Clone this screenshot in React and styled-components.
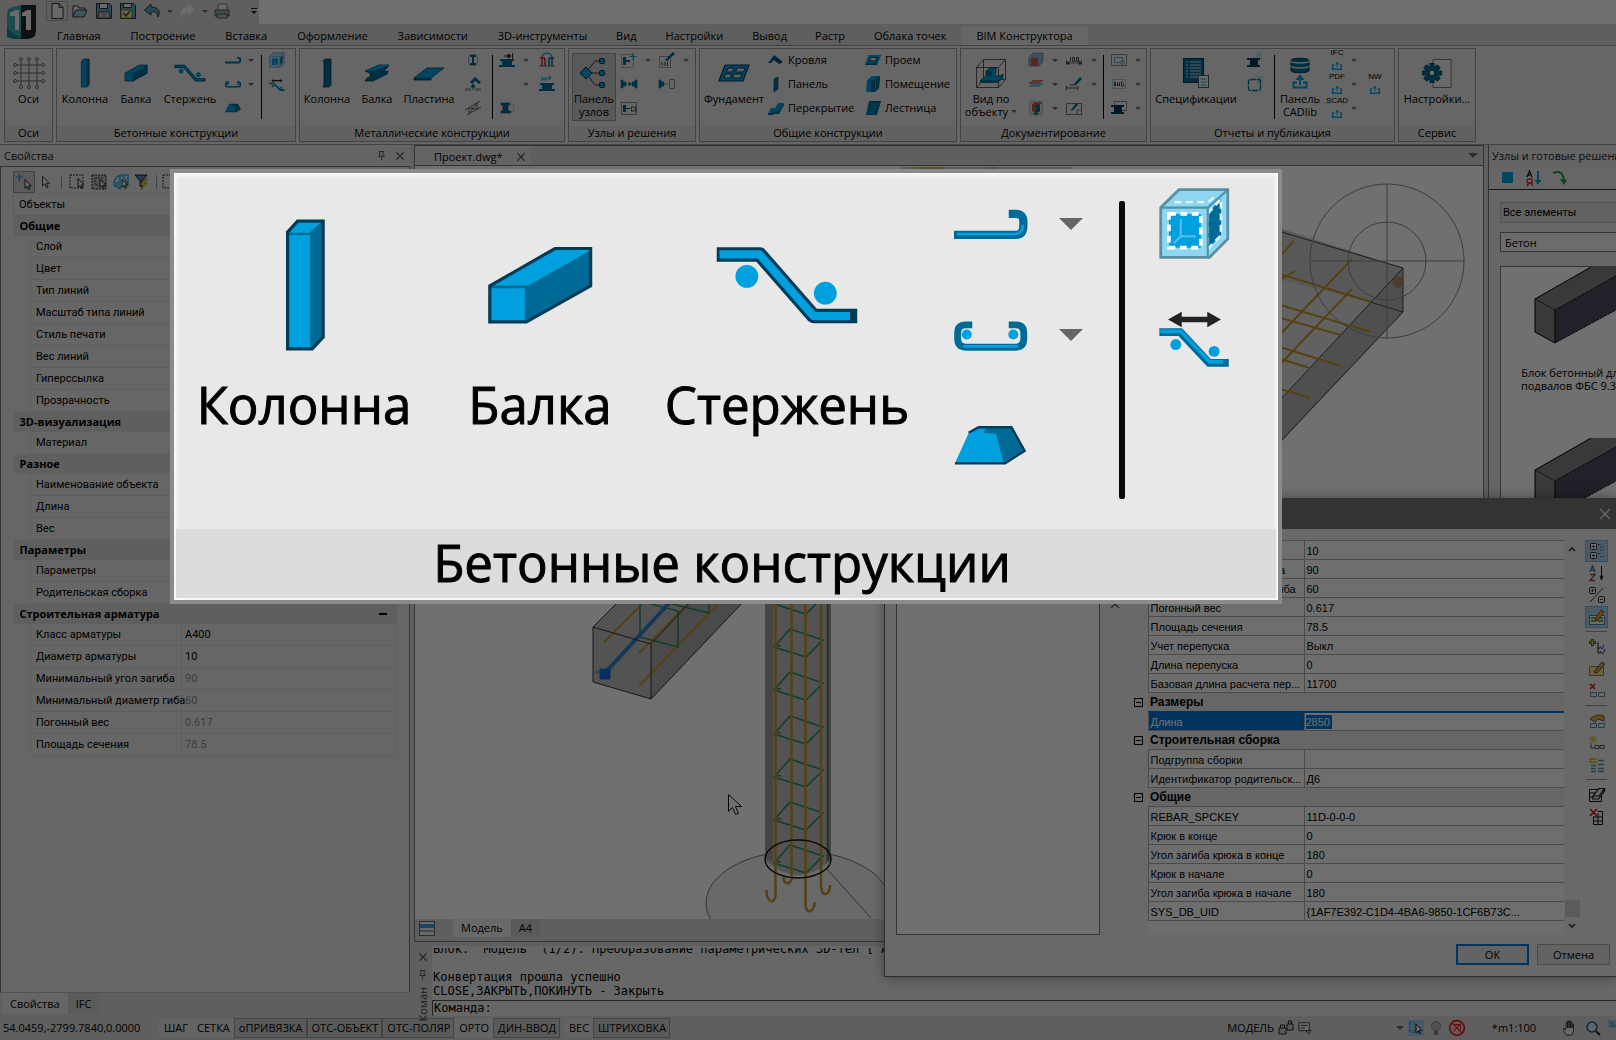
import React from 'react'
import styled, { createGlobalStyle } from 'styled-components'

const BLUE = '#00a0df';
const DARK = '#006a96';
const LINE = '#003c55';

const GlobalStyle = createGlobalStyle`
*{ box-sizing:border-box; }
html, body, #root{ height:100%; }
body{
    margin:0;
    overflow:hidden;
    background:#d8d8d8;
    color:#000;
    font-family:"Open Sans", sans-serif;
    font-size:11px;
    line-height:14px;
}
button, input, select{ font:inherit; color:inherit; }
button{ border:none; background:none; padding:0; }
a{ color:inherit; text-decoration:none; }
table{ border-collapse:collapse; }
`;

/* ---------- icons ---------- */

// 32 x 32 ribbon icons
const large = {
    axes: <g fill="none" stroke="#666"><path d="M8 4v24M16 4v24M24 4v24M4 8h24M4 16h24M4 24h24" /><g fill="#ececec"><circle cx="8" cy="2" r="1.5" /><circle cx="16" cy="2" r="1.5" /><circle cx="24" cy="2" r="1.5" /><circle cx="8" cy="30" r="1.5" /><circle cx="16" cy="30" r="1.5" /><circle cx="24" cy="30" r="1.5" /><circle cx="2" cy="8" r="1.5" /><circle cx="2" cy="16" r="1.5" /><circle cx="2" cy="24" r="1.5" /><circle cx="30" cy="8" r="1.5" /><circle cx="30" cy="16" r="1.5" /><circle cx="30" cy="24" r="1.5" /></g></g>,
    column: <><path d="M12.4 4.4 14.6 2h5.6v25.4l-2.4 2.6h-5.4z" fill={BLUE} /><path d="M17.4 4.4 20 2v25.4L17.6 30z" fill={DARK} /><path d="M12.4 4.8h5.2v25" fill="none" stroke={DARK} strokeWidth=".5" /><path d="M12.4 4.4 14.6 2h5.6v25.4l-2.4 2.6h-5.4z" fill="none" stroke={LINE} strokeWidth=".7" /></>,
    beam: <><path d="M5 16.2 19.3 8h7.8v8.2L13 24.1H5z" fill={BLUE} /><path d="M13 16.4 27.1 8.4v7.8L13 24.1z" fill={DARK} /><path d="M5 16.4h8v7.7" fill="none" stroke={DARK} strokeWidth=".6" /><path d="M5 16.2 19.3 8h7.8v8.2L13 24.1H5z" fill="none" stroke={LINE} strokeWidth=".7" /></>,
    rod: <><g fill="none" strokeLinejoin="round"><path d="M.6 9.3H10L21.8 22.8h9.6" stroke={LINE} strokeWidth="3.2" /><path d="M1.2 9.3H10L21.8 22.8h8" stroke={BLUE} strokeWidth="1.8" /></g><circle cx="7.2" cy="14.1" r="2.5" fill={BLUE} /><circle cx="24.4" cy="17.8" r="2.5" fill={BLUE} /></>,
    steelColumn: <path d="M12 4l2-2h6v26l-2 2h-6l1-2V5z" fill={DARK} stroke={LINE} strokeWidth=".8" />,
    steelBeam: <><path d="M4 14 18 8h10l-2 3-2 1v3l3-1-1 3-14 7H4l2-3 3-1v-4z" fill={DARK} stroke={LINE} strokeWidth=".8" /><path d="M4 14 18 8h10l-14 6z" fill={BLUE} /></>,
    plate: <><path d="M1 21 14 11h17L18 21v2H1z" fill={DARK} stroke={LINE} strokeWidth=".8" /><path d="M2 20.500 14 11.500h16L18 20.500z" fill={BLUE} /></>,
    nodes: <><path d="M8 16 17 4h8M8 16h17M8 16l9 12h8" fill="none" stroke="#333" /><path d="M2 16l6-6 6 6-6 6z" fill={BLUE} stroke={LINE} /><g fill={BLUE} stroke={LINE}><rect x="21.500" y="1.500" width="5" height="5" rx="1" /><rect x="21.500" y="13.500" width="5" height="5" rx="1" /><rect x="21.500" y="25.500" width="5" height="5" rx="1" /></g></>,
    foundation: <><path d="M7 8h24l-6 16H1z" fill={BLUE} stroke={LINE} strokeWidth="1.2" /><path d="M10 11h6l-1.500 4H8.500zM19 11h8l-1.500 4h-8zM7.500 17h6L12 21H6zM16 17h8l-1.500 4h-8z" fill="#d8d8d8" stroke={LINE} /></>,
    viewBox: <><path d="M1.500 10.500h22v20h-22zM1.500 10.500l7-8h22v20l-7 8M30 3l-6.500 7.500M8.500 2.500v20h22M8.500 22.500l-7 8" fill="none" stroke="#333" strokeWidth=".8" /><path d="M5 24l6-5v-5l4-3h6v5l-2 3h6l3-2v3l-6 4z" fill={BLUE} stroke={LINE} strokeWidth=".8" /><path d="M5 24h17l6-5v3l-6 4H5zM11 14h6v5h-6z" fill={DARK} /></>,
    spec: <><rect x="3.500" y="1.500" width="20" height="24" fill={DARK} stroke={LINE} /><path d="M6 5h2M6 8h2M6 11h2M6 14h2M6 17h2M6 20h2M10 5h11M10 8h11M10 11h11M10 14h11M10 17h11M10 20h9" stroke="#ddd" /><rect x="18.500" y="18.500" width="10" height="12" fill="#f2f2f2" stroke="#555" /><path d="M20.500 22h6M20.500 25h6M20.500 28h6" stroke={BLUE} /></>,
    cadlib: <><path d="M7 3.500c0-3 18-3 18 0v10c0 3-18 3-18 0z" fill={DARK} stroke={LINE} /><path d="M7 4c0 2.500 18 2.500 18 0M7 9c0 2.500 18 2.500 18 0" fill="none" stroke="#ddd" strokeWidth="1.500" /><path d="M16 28V21M13.500 22l2.500-3 2.500 3z" fill={BLUE} stroke={BLUE} strokeWidth="2" /><path d="M13 25.500H9.500v5h13v-5H19" fill="none" stroke={BLUE} strokeWidth="2" /></>,
    settings: <><path d="M12 2.500h18v28H12z" fill="#f2f2f2" stroke="#777" /><path d="M11 6v20M1 16h20M4 9l14 14M18 9 4 23" stroke={LINE} strokeWidth="5" /><path d="M11 6.500v19M1.500 16h19M4.400 9.400l13.200 13.200M17.600 9.400 4.400 22.600" stroke={DARK} strokeWidth="3.600" /><circle cx="11" cy="16" r="7" fill={DARK} /><circle cx="11" cy="16" r="3" fill="#f2f2f2" stroke={LINE} /></>,
};

// 16 x 16 icons
const small = {
    hook: <g fill="none"><path d="M0 10.500h13.500q1.700 0 1.700-2V7.500q0-1.600-1.700-1.600h-1.500" stroke={DARK} strokeWidth="1.800" /><path d="M.6 10.300h12.600q1.900 0 1.900-2" stroke={BLUE} strokeWidth=".6" /></g>,
    clamp: <><path d="M4 5.900H2.600Q.8 5.900.8 7.700v1.200q0 1.900 1.900 1.900h10.700q1.900 0 1.900-1.900V7.700q0-1.800-1.800-1.800h-1.500" fill="none" stroke={DARK} strokeWidth="1.500" /><path d="M2 10.600h12" stroke={BLUE} strokeWidth=".6" /><circle cx="2.800" cy="8" r="1.100" fill={BLUE} /><circle cx="13" cy="8" r="1.100" fill={BLUE} /></>,
    pit: <><path d="M.2 11.900 3.200 5.300 5.400 4h7.200l2.900 5.200-4.300 2.700z" fill={BLUE} /><path d="M9.200 5.400 6.400 5.200 7 4.300 12.600 4l2.900 5.200-4.600 2.700z" fill={DARK} /><path d="M3.200 5.200 5.400 4h7.200l2.900 5.200-4.300 2.700H.2" fill="none" stroke={LINE} strokeWidth=".5" /></>,
    cube: <><path d="M.6 4.500 4.600.6h10.700v10.800l-4 4H.6z" fill="#8fd6f1" stroke="#5b8fa3" strokeWidth=".6" /><path d="M2.400 5.900h7v7.400h-7z" fill={BLUE} stroke="#fff" strokeWidth=".8" strokeDasharray="1.500 1" /><path d="M10.900 5.800 13.800 2.600v8l-2.900 3z" fill={DARK} stroke="#dff4fb" strokeWidth=".6" strokeDasharray="1.500 1" /><path d="M.6 4.500h10.300v10.900M10.900 4.500 15.300.6" fill="none" stroke="#4a94b0" strokeWidth=".5" /><path d="M3.600 3.300h7.400l1.800-1.500" fill="none" stroke="#dff4fb" strokeWidth=".5" strokeDasharray="1.500 1" /><path d="M3.500 12.300 5 10.800h3.300M5 10.800V7" fill="none" stroke="#4fbdea" strokeWidth=".5" /></>,
    rodMove: <><path d="M2.200 4.700 5.200 3v1.100h5.600V3l3 1.700-3 1.700V5.300H5.200v1.100z" fill="#222" /><path d="M.3 7.500h4.600l6.300 6.700h4.300" fill="none" stroke={DARK} strokeWidth="1.700" /><path d="M.5 7.300H5l6.300 6.700h3" fill="none" stroke={BLUE} strokeWidth=".8" /><circle cx="3.900" cy="10.200" r="1.200" fill={BLUE} /><circle cx="12.300" cy="11.700" r="1.200" fill={BLUE} /></>,
    bolt: <><rect x="3.500" y="2.500" width="9" height="11" rx="3" fill="none" stroke="#999" /><path d="M5 3h6v2H9v6h2v2H5v-2h2V5H5z" fill={DARK} /></>,
    roofNode: <><path d="M5 6 10 1l6 5-2 2-4-3-3 3z" fill={DARK} /><path d="M8 14v-4M6 11l2-3 2 3z" stroke={DARK} fill={DARK} /><path d="M0 12h6v3H0zM10 12h6v3h-6z" fill="#aaa" /></>,
    truss: <path d="M0 10 15 1M2 15l14-8M4 8v6M12 3v6M4 14l8-11M4 8l8 1" fill="none" stroke="#666" />,
    plateArrow: <><path d="M1 7h14v2h-2v4h3v2H0v-2h3V9H1z" fill={DARK} /><path d="M5 4h6M9 2l3 2-3 2zM13.500 1v6" stroke="#222" fill="#222" /></>,
    ibeam: <><path d="M2 3h9v2H9v6h3v2H2v-2h2V5H2z" fill={DARK} stroke={LINE} strokeWidth=".6" /><path d="M10 4h5v3h-4M11 12h4V9" fill="none" stroke="#bbb" /></>,
    arch: <><path d="M3 6C3-.5 13-.5 13 6" fill="none" stroke={BLUE} strokeWidth="1.300" /><path d="M0 14h16" stroke="#666" /><path d="M1 6h5M3 6v8M6 6v8" stroke="#c22" strokeWidth="1.500" /><path d="M10 6h5M10 6v8M13 6v8" stroke={DARK} strokeWidth="1.500" /></>,
    mass: <><path d="M3 5V1l2 3 2-3v4M9 1h3L9 3h3" fill="none" stroke={BLUE} /><path d="M1 7h14v2h-2v4h3v2H0v-2h3V9H1z" fill={DARK} /></>,
    nodeAdd: <><rect x=".5" y="2.500" width="12" height="13" fill="none" stroke="#aaa" /><path d="M2 5h3v8H2zM5 8h4v2H5z" fill={DARK} /><path d="M12 1v7M8.500 4.500h7" stroke={BLUE} /></>,
    nodePair: <path d="M0 4h2v8H0zM2 6h3v4H2zM11 6h3v4h-3zM14 4h2v8h-2zM6 8h4M8 6l2 2-2 2z" fill={DARK} stroke={DARK} strokeWidth=".6" />,
    nodeFrame: <><rect x=".5" y="2.500" width="15" height="12" fill="none" stroke="#888" /><path d="M2 5h3v7H2zM5 8h4v1H5z" fill={DARK} /><rect x="10.500" y="7" width="4" height="4" fill="none" stroke="#555" /></>,
    nodeEdit: <><rect x=".5" y="4.500" width="11" height="11" fill="none" stroke="#999" /><path d="M3 10v4M6 10v4M8.500 10v4" stroke="#444" /><path d="M6 8 14 0l2 2-8 7z" fill={DARK} /></>,
    nodeCopy: <><path d="M0 4h2v8H0zM2 6h3v4H2zM6 8h3" fill={DARK} stroke={DARK} strokeWidth=".6" /><rect x="10.500" y="3.500" width="5" height="9" fill="none" stroke="#888" /></>,
    roof: <><path d="M0 11 6 3l9 7-4 2-5-4-3 3z" fill={DARK} /><path d="M6 3l9 7-4 2L5 7z" fill={LINE} opacity=".5" /></>,
    panel: <path d="M6 3 10 1v12l-4 3z" fill={DARK} stroke={LINE} strokeWidth=".6" />,
    slab: <><path d="M0 14l3-6h4l3-5h6l-5 10H6l-1 2H0z" fill={BLUE} /><path d="M0 13h5l1-2h5l5-8v2l-5 9H6l-1 1H0z" fill={DARK} /></>,
    opening: <><path d="M4 3h12l-4 10H0z" fill={DARK} /><path d="M4 3h12l-3.500 8H1z" fill={BLUE} /><path d="M6 5.500h6L10.500 9h-6z" fill="#e8e8e8" stroke={LINE} /></>,
    room: <><path d="M2 4 7 0h8l-1 12-4 4H1z" fill={BLUE} /><path d="M6 4h4v12H6zM11 3l4-3-1 12-3 3z" fill={DARK} /></>,
    stairs: <><path d="M4 1h12l-4 14H1z" fill={DARK} /><path d="M5 4h8M4 7h8M3.500 10h8M3 13h7" stroke={BLUE} strokeWidth="1.200" /></>,
    cutCube: <><path d="M1 5l4-4h10v9l-4 4H1z" fill="#7fb9cf" stroke="#777" strokeWidth=".6" /><path d="M3 6h7v8H3z" fill="#d9534f" /></>,
    cutPlane: <><path d="M5 4h11l-5 4H0z" fill="#d9736f" /><path d="M5 7h11l-5 4H0z" fill="#7fb9cf" /></>,
    cutBoth: <><rect x="2" y="2" width="12" height="12" fill="none" stroke="#999" /><path d="M4 4l4-2 4 2v7l-4 3-4-3z" fill="#c9534f" /><path d="M8 6l4-2v7l-4 3z" fill={DARK} /><path d="M8 16l-3-3h6zM11 1l3 3h-3z" fill="#2a8f4c" /></>,
    dim: <><path d="M0 11h16M.5 8v5M15.500 8v5M3 9.500 0 11l3 1.500zM13 9.500l3 1.500-3 1.500z" stroke="#444" fill="#444" strokeWidth=".7" /><path d="M4.500 5v4.500M6.500 5.500h2v4h-2zM10.500 5.500h2v4h-2z" fill="none" stroke="#444" /></>,
    dimEdit: <><path d="M0 12h12M.5 10v4M12 10v4M4 9h4" stroke="#444" fill="none" /><path d="M8 8 14 1l2 2-7 7z" fill={DARK} /></>,
    sheet: <><rect x=".5" y="3.500" width="15" height="11" fill="none" stroke="#777" /><path d="M11 14v-4h4" fill="none" stroke="#777" /><path d="M5 10 10 3l2 2-6 6z" fill={DARK} /></>,
    sheetView: <><rect x=".5" y="2.500" width="15" height="11" fill="none" stroke="#888" /><rect x="3.500" y="5.500" width="8" height="5" fill="none" stroke="#62b5d4" /><path d="M10 9h3v3h-3z" fill="#ececec" stroke="#888" /></>,
    dwg: <><rect x="1.500" y="3.500" width="13" height="9" fill="none" stroke="#8cc4da" /><path d="M3.500 6v4h1V6zM6.500 6v4l1-2 1 2V6M12.500 6h-2v4h2V8" fill="none" stroke="#333" strokeWidth=".8" /></>,
    beamDoc: <><rect x="3.500" y="1.500" width="12" height="9" fill="#f0f0f0" stroke="#888" /><path d="M0 5h13v2h-2v5h2v2H0v-2h3V7H0z" fill={LINE} /></>,
    beamPage: <><path d="M9 0h6v9H9z" fill="#b6dcea" /><path d="M0 6h13v2h-2v5h2v2H0v-2h3V8H0z" fill={LINE} /></>,
    nodePage: <><path d="M10 0h6v9h-6z" fill="#b6dcea" /><rect x="1.500" y="3.500" width="12" height="11" rx="2" fill="none" stroke={DARK} strokeWidth="1.300" strokeDasharray="6 1" /></>,
    share: <><path d="M8 12V7M6.500 8 8 6l1.500 2z" stroke={BLUE} fill={BLUE} /><path d="M5 9H3v5h10V9h-2" fill="none" stroke={BLUE} strokeWidth="1.500" /></>,
    newDoc: <path d="M3 .5h7l4 4v11H3zM10 .5v4h4" fill="#f0f0f0" stroke="#333" />,
    open: <><path d="M1 13V3h5l1 2h6v2" fill="#eee" stroke="#333" /><path d="M1 13 4 7h11l-3 7H1z" fill="#8cc4da" stroke="#333" /></>,
    save: <><path d="M.5.5h13l2 2v13H.5z" fill="#5aa5c4" stroke="#333" /><path d="M3.500.5h8v5h-8zM3 9h10v6H3z" fill="#eee" stroke="#333" /><path d="M5 11h6M5 13h6" stroke="#555" /></>,
    saveCheck: <><path d="M.5.5h13l2 2v13H.5z" fill="#5aa5c4" stroke="#333" /><path d="M3.500.5h8v4h-8z" fill="#eee" stroke="#333" /><path d="M1 7h11v8H1z" fill="#f0e2a0" stroke="#8a7a40" /><path d="M3 10l3 3 4-5" fill="none" stroke="#446" strokeWidth="1.500" /></>,
    undo: <path d="M7 1 .5 7 7 12V9c4-1 6 1 7 5 3-6 0-10-7-10z" fill="#5aa5c4" stroke="#333" />,
    redo: <path d="M9 1 16 7l-7 6V9C6 9 4 11 2 15 0 8 3 4 9 4z" fill="#f6f6f6" />,
    print: <><path d="M4 1h9v7H4z" fill="#eee" stroke="#777" /><path d="M1 7h14v6H1z" fill="#9aa" stroke="#555" /><path d="M3 11h10v4H3z" fill="#8fcf9b" stroke="#555" /></>,
    cursor: <path d="M4 1.500v11l2.700-2.500 2 4.500 1.800-.8-2-4.300h3.500z" fill="#f2f2f2" stroke="#222" />,
    cursorPlus: <><path d="M0 3h7M3.500 0v7" stroke={BLUE} strokeWidth="1.200" /><path d="M9 5.500v9l2.200-2 1.400 3 1.300-.6-1.400-3h2.800z" fill="#f2f2f2" stroke="#222" /></>,
    selBox: <><rect x="1" y="1" width="13" height="13" fill="none" stroke="#222" strokeDasharray="2 1" /><path d="M9 4.500v9l2.200-2 1.300 3 1.300-.6-1.300-3H15z" fill="#f2f2f2" stroke="#222" /></>,
    selAll: <><rect x="1" y="1" width="14" height="14" fill="#bbb" stroke="#222" strokeDasharray="2 1" /><rect x="4" y="4" width="7" height="7" fill="none" stroke="#444" strokeDasharray="2 1" /><path d="M9 5.500v8l2-2 1.200 3 1.200-.6-1.200-2.700H15z" fill="#f2f2f2" stroke="#222" /></>,
    selTri: <><path d="M7 1C3 3 1 6 1 9h6zM1 11h6v4zM9 1h6v9z" fill="#d5e6ee" stroke={BLUE} strokeWidth="1.200" /><path d="M9 5.500v8l2-2 1.200 3 1.200-.6-1.200-2.700H15z" fill="#f2f2f2" stroke="#222" /></>,
    filter: <><path d="M0 1h12L7 7v6l-2-1V7z" fill="#5b7fb5" stroke="#223" /><path d="M10 5 5 11h3l-2 5 6-7H9l4-4z" fill="#f0cf2e" stroke="#7a6510" strokeWidth=".5" /></>,
    square: <path d="M2 2h11v11H2z" fill={BLUE} />,
    sortAz: <><path d="M1 7 3.500 1 6 7M2 5h3" fill="none" stroke="#222" strokeWidth="1.400" /><path d="M6 16V9H3Q1 9 1 11t2 2h3M3 13l-2 3" fill="none" stroke="#d22" strokeWidth="1.400" /><path d="M12 1v10" stroke={BLUE} strokeWidth="2" /><path d="M8.500 10h7L12 15z" fill={BLUE} /></>,
    turn: <><path d="M1 3q10-4 11 8" fill="none" stroke="#1f9a4c" strokeWidth="2" /><path d="M8 9l7 1-3 5z" fill="#1f9a4c" /></>,
    layout: <><rect x=".5" y=".5" width="15" height="14" fill="#f2f2f2" stroke="#666" /><path d="M1 3h14v4H1z" fill="#3f9fe0" /><path d="M1 10h14" stroke="#666" /></>,
    pin: <path d="M4 2h7M5 2v6M9.500 2v6M3 8.500h9M7.500 9v5" fill="none" stroke="#555" strokeWidth="1.300" />,
    cross: <path d="M3 3l10 10M13 3 3 13" stroke="#555" strokeWidth="1.500" />,
    crossLight: <path d="M3 3l10 10M13 3 3 13" stroke="#eee" strokeWidth="1.300" />,
    // property grid tools
    tree: <><rect x="1.500" y=".5" width="6" height="6" rx="1" fill="#fff" stroke="#223" /><rect x="1.500" y="9.500" width="6" height="6" rx="1" fill="#fff" stroke="#223" /><path d="M3 3.500h3M4.500 2v3M3 12.500h3M4.500 11v3" stroke="#223" /><path d="M9 1.500h4M9 10.500h4M11 4h4M11 7h4M11 13.500h4" stroke="#446a9a" strokeDasharray="2 1" /></>,
    az: <><path d="M1 7 3.500 1 6 7M2 5h3" fill="none" stroke="#37a" strokeWidth="1.300" /><path d="M1 9.500h5l-5 6h5" fill="none" stroke="#a33" strokeWidth="1.300" /><path d="M12.500 1v11M11 11h3l-1.500 4z" stroke="#222" fill="#222" /></>,
    plusMinus: <><rect x=".5" y=".5" width="6" height="6" rx="1" fill="none" stroke="#222" /><path d="M2 3.500h3M3.500 2v3M14 1 1 15M11 12.500h3" stroke="#444" /><rect x="9.500" y="9.500" width="6" height="6" rx="1" fill="none" stroke="#222" /></>,
    editProps: <><path d="M.5 6.500h15v9H.5z" fill="#ffffd8" stroke="#4a7ab5" /><path d="M2 9h5M2 12h5M9 9h5M9 12h5" stroke="#285" strokeWidth="1.500" /><path d="M6 11 12 1l3 2-7 9z" fill="#f0b42e" stroke="#a33" /></>,
    addTree: <><path d="M3.500 0v7M0 3.500h7" stroke="#555" strokeWidth="2.800" /><path d="M3.500 1v5M1 3.500h5" stroke="#c8d040" /><path d="M9 3v11h3M9 9h2" fill="none" stroke="#222" /><path d="M11 7l2 3 2-4M11 12l3 3 2-5" fill="none" stroke="#33d" /></>,
    pencil: <><path d="M.5 5.500h14v9H.5z" fill="#f2dc9a" stroke="#a08030" /><path d="M5 11 13 1l3 2-8 9z" fill="#e0a24a" stroke="#543" /></>,
    removeRow: <><path d="M1 1l5 5M6 1 1 6" stroke="#d22" strokeWidth="1.600" /><path d="M1.500 9.500h6v4h-6zM9.500 9.500h6v4h-6z" fill="#eee" stroke="#58a" /></>,
    hand: <><path d="M1 6q6-6 14-3v5L9 6 6 9z" fill="#d8b040" stroke="#754" /><path d="M1.500 10.500h6v4h-6zM9.500 10.500h6v4h-6z" fill="#eee" stroke="#58a" /></>,
    sparkRow: <><path d="M4 0v8M0 4h8M1 1l6 6M7 1 1 7" stroke="#e0c020" /><path d="M2 8v5h3M6 10.500h4v3H6zM11 10.500h4v3h-4z" fill="none" stroke="#555" /></>,
    sparkGrid: <><path d="M0 2h8M0 5h8" stroke="#e0c020" strokeWidth="2" /><path d="M2 8.500h5M2 11.500h5M2 14.500h5M9 3.500h6M9 7.500h6M9 11.500h6M9 14.500h6" stroke="#58a" strokeWidth="1.500" /></>,
    erase: <><path d="M9 2.500H.5v12h12V9M1 6h6M1 10h4" fill="none" stroke="#111" /><path d="M4 9 10 1.500h5.500L10 9zM4 9v3h5.500l6-8V1.500" fill="#eee" stroke="#111" strokeWidth="1.200" /></>,
    eraseRed: <><path d="M4.500 8v7.500h9v-13H9M4 8h10M4 12h10M9 4v11" fill="none" stroke="#111" /><path d="M1 0l7 7M8 0 1 7" stroke="#c11" strokeWidth="1.500" /></>,
    locks: <path d="M1 8h7v6H1zM2.500 8V5h4v3M9 4h6v6H9zM10.500 4V1h3v3" fill="#ccc" stroke="#222" />,
    tray: <path d="M1 2h12v9H1zM3 5h8M3 8h5M9 11h6l-3 4z" fill="#eee" stroke="#333" />,
    selFilter: <><rect width="16" height="16" fill="#9fd0f0" /><path d="M2 2h5v10H2z" fill="none" stroke="#28c" strokeDasharray="2 1" /><path d="M8 4v9l2-2 1.500 3 1-.5-1.500-3h3z" fill="#fff" stroke="#222" /></>,
    bulb: <><circle cx="8" cy="6" r="4.500" fill="#bbb" stroke="#888" /><path d="M6 11h4v4H6z" fill="#888" /></>,
    noTrack: <><circle cx="8" cy="8" r="6.500" fill="#f3c9c9" stroke="#d22" strokeWidth="1.500" /><path d="M3 3l10 10M5 11l6-7M5 5h6v6" fill="none" stroke="#d22" /></>,
    pan: <path d="M4 15 1 9l1-1 2 2V3h1.500v5V1H7v7-7h1.500v7-6H10v6-4h1.500v7L10 15z" fill="#eee" stroke="#222" strokeWidth=".8" />,
    zoom: <><circle cx="7" cy="7" r="5" fill="#cfe6f2" stroke="#357" strokeWidth="1.500" /><path d="M11 11l4 4" stroke="#222" strokeWidth="2" /></>,
};

const Svg = styled.svg`
display:block;
flex:none;
overflow:visible;
`;

const Big = ({ name, size = 32 }) => (
    <Svg width={size} height={size} viewBox="0 0 32 32" aria-hidden="true">{large[name]}</Svg>
)

const Small = ({ name, size = 16 }) => (
    <Svg width={size} height={size} viewBox="0 0 16 16" aria-hidden="true">{small[name]}</Svg>
)

const Caret = styled.span`
display:block;
flex:none;
width:0;
height:0;
border:${({ $size }) => $size || 3}px solid transparent;
border-top-color:#666;
border-bottom:0;
`;

/* ---------- frame ---------- */

const Page = styled.div`
display:flex;
flex-direction:column;
height:100vh;
`;
const Header = styled.header`
display:flex;
height:45px;
flex:none;
background:#d8d8d8;
`;
const LogoBox = styled.div`
width:42px;
padding:5px 0 0 7px;
flex:none;
`;
const HeaderMain = styled.div`
flex:1;
min-width:0;
`;
const TitleRow = styled.div`
display:flex;
height:24px;
`;
const QuickBar = styled.div`
display:flex;
align-items:center;
width:217px;
padding:0 0 2px 5px;
flex:none;
`;
const QuickButton = styled.button`
display:flex;
align-items:center;
justify-content:center;
width:${({ $wide }) => $wide || 24}px;
height:18px;
outline:${({ $on }) => $on ? '1px solid #aaa' : 'none'};
`;
const TitleFill = styled.div`
flex:1;
background:#fff;
`;
const TabRow = styled.nav`
display:flex;
align-items:flex-end;
height:21px;
`;
const RibbonTab = styled.a`
height:18px;
padding:2px ${({ $short }) => $short ? 14 : 15}px 0;
white-space:nowrap;
background:${({ $active }) => $active ? '#e8e8e8' : 'transparent'};
`;

const Ribbon = styled.section`
display:flex;
gap:3px;
flex:none;
height:100px;
padding:2px 0 0 4px;
background:#e8e8e8;
border-top:1px solid #999;
border-bottom:1px solid #999;
`;
const Group = styled.div`
display:flex;
flex-direction:column;
flex:none;
width:${({ $w }) => $w}px;
height:94px;
padding:0 1px 1px;
box-shadow:inset 0 0 0 1px #999;
`;
const GroupBody = styled.div`
display:flex;
flex:1;
padding-left:${({ $pad }) => $pad || 0}px;
`;
const GroupTitle = styled.div`
height:15px;
background:#dcdcdc;
text-align:center;
white-space:nowrap;
`;
const BigButton = styled.button`
display:flex;
flex-direction:column;
align-items:center;
flex:none;
width:${({ $w }) => $w}px;
height:66px;
margin-top:6px;
padding-top:3px;
line-height:13px;
white-space:nowrap;
background:${({ $on }) => $on ? '#cbcbcb' : 'transparent'};
outline:${({ $on }) => $on ? '1px solid #9a9a9a' : 'none'};
`;
const BigLabel = styled.span`
display:flex;
align-items:center;
gap:3px;
margin-top:${({ $first }) => $first ? 3 : 0}px;
`;
const Column = styled.div`
display:flex;
flex-direction:column;
flex:none;
width:${({ $w }) => $w}px;
`;
const Cell = styled.button`
display:flex;
flex-direction:column;
align-items:center;
justify-content:center;
width:100%;
height:24px;
`;
const Tiny = styled.span`
font-family:"Liberation Sans", sans-serif;
font-size:8px;
line-height:8px;
`;
const TextCell = styled.button`
display:flex;
align-items:center;
gap:4px;
height:24px;
white-space:nowrap;
`;
const Rule = styled.div`
flex:none;
width:1px;
height:64px;
margin:7px 0 0 ${({ $gap }) => $gap}px;
background:#000;
`;

const Logo = () => (
    <Svg width="30" height="34" viewBox="0 0 30 34" aria-hidden="true">
        <path d="M6 2Q0 3 0 9v23h14V0z" fill="#3fa9b5" />
        <path d="M14 0h15v26q0 8-9 8h-6z" fill="#1d2a2e" />
        <path d="M0 32V22q6 8 14 10v2H6z" fill="#1f7f8c" />
        <path d="M3 8l6-3h3v20H8V11H3zM15 8l5-3h4v20h-5V11h-4z" fill="#f4f4f4" />
    </Svg>
)

const Icons = ({ w, names }) => (
    <Column $w={w}>
        {names.map((n, i) => <Cell key={i} aria-label={n || 'пусто'}>{n && <Small name={n} />}</Cell>)}
    </Column>
)

const Carets = ({ w, rows }) => (
    <Column $w={w}>
        {rows.map((on, i) => <Cell key={i} aria-label="Ещё">{on ? <Caret /> : null}</Cell>)}
    </Column>
)

const Tool = ({ w, icon, lines, on, caret }) => (
    <BigButton $w={w} $on={on}>
        <Big name={icon} />
        {lines.map((t, i) => (
            <BigLabel key={t} $first={i === 0}>{t}{caret && i === lines.length - 1 && <Caret />}</BigLabel>
        ))}
    </BigButton>
)

const Texts = ({ w, items }) => (
    <Column $w={w}>
        {items.map(([icon, t]) => <TextCell key={t}><Small name={icon} />{t}</TextCell>)}
    </Column>
)

const tabs = ['Главная', 'Построение', 'Вставка', 'Оформление', 'Зависимости', '3D-инструменты', 'Вид', 'Настройки', 'Вывод', 'Растр', 'Облака точек', 'BIM Конструктора'];

const TopBar = () => (
    <Header>
        <LogoBox><Logo /></LogoBox>
        <HeaderMain>
            <TitleRow>
                <QuickBar>
                    <QuickButton $wide={20} $on aria-label="Создать"><Small name="newDoc" /></QuickButton>
                    <QuickButton $wide={26} aria-label="Открыть"><Small name="open" /></QuickButton>
                    <QuickButton $wide={22} aria-label="Сохранить"><Small name="save" /></QuickButton>
                    <QuickButton $wide={26} aria-label="Сохранить как"><Small name="saveCheck" /></QuickButton>
                    <QuickButton $wide={22} aria-label="Отменить"><Small name="undo" /></QuickButton>
                    <QuickButton $wide={14} aria-label="Ещё"><Caret /></QuickButton>
                    <QuickButton $wide={20} aria-label="Вернуть"><Small name="redo" /></QuickButton>
                    <QuickButton $wide={16} aria-label="Ещё"><Caret /></QuickButton>
                    <QuickButton $wide={18} aria-label="Печать"><Small name="print" /></QuickButton>
                    <Grow />
                    <QuickButton $wide={10} aria-label="Настроить">
                        <Svg width="6" height="7" viewBox="0 0 6 7"><path d="M0 .5h6" stroke="#222" /><path d="M0 3h6L3 6z" fill="#222" /></Svg>
                    </QuickButton>
                </QuickBar>
                <TitleFill />
            </TitleRow>
            <TabRow>
                {tabs.map((t, i) => <RibbonTab key={t} href="#" $short={t.length < 6} $active={i === tabs.length - 1}>{t}</RibbonTab>)}
            </TabRow>
        </HeaderMain>
    </Header>
)

const RibbonBar = () => (
    <Ribbon>
        <Group $w={49}>
            <GroupBody><Tool w={47} icon="axes" lines={['Оси']} /></GroupBody>
            <GroupTitle>Оси</GroupTitle>
        </Group>
        <Group $w={240}>
            <GroupBody $pad={1}>
                <Tool w={54} icon="column" lines={['Колонна']} />
                <Tool w={48} icon="beam" lines={['Балка']} />
                <Tool w={60} icon="rod" lines={['Стержень']} />
                <Icons w={26} names={['hook', 'clamp', 'pit']} />
                <Carets w={9} rows={[1, 1, 0]} />
                <Rule $gap={6} />
                <Icons w={30} names={['cube', 'rodMove']} />
            </GroupBody>
            <GroupTitle>Бетонные конструкции</GroupTitle>
        </Group>
        <Group $w={266}>
            <GroupBody>
                <Tool w={54} icon="steelColumn" lines={['Колонна']} />
                <Tool w={46} icon="steelBeam" lines={['Балка']} />
                <Tool w={58} icon="plate" lines={['Пластина']} />
                <Icons w={30} names={['bolt', 'roofNode', 'truss']} />
                <Rule $gap={4} />
                <Icons w={28} names={['plateArrow', null, 'ibeam']} />
                <Carets w={10} rows={[1, 1, 0]} />
                <Icons w={32} names={['arch', 'mass']} />
            </GroupBody>
            <GroupTitle>Металлические конструкции</GroupTitle>
        </Group>
        <Group $w={128}>
            <GroupBody $pad={4}>
                <Tool w={42} icon="nodes" lines={['Панель', 'узлов']} on />
                <Icons w={28} names={['nodeAdd', 'nodePair', 'nodeFrame']} />
                <Carets w={9} rows={[1, 0, 0]} />
                <Icons w={30} names={['nodeEdit', 'nodeCopy']} />
                <Carets w={7} rows={[1, 0, 0]} />
            </GroupBody>
            <GroupTitle>Узлы и решения</GroupTitle>
        </Group>
        <Group $w={258}>
            <GroupBody>
                <Tool w={68} icon="foundation" lines={['Фундамент']} />
                <Texts w={97} items={[['roof', 'Кровля'], ['panel', 'Панель'], ['slab', 'Перекрытие']]} />
                <Texts w={86} items={[['opening', 'Проем'], ['room', 'Помещение'], ['stairs', 'Лестница']]} />
            </GroupBody>
            <GroupTitle>Общие конструкции</GroupTitle>
        </Group>
        <Group $w={187}>
            <GroupBody>
                <Tool w={60} icon="viewBox" lines={['Вид по', 'объекту']} caret />
                <Icons w={30} names={['cutCube', 'cutPlane', 'cutBoth']} />
                <Carets w={7} rows={[1, 1, 1]} />
                <Icons w={32} names={['dim', 'dimEdit', 'sheet']} />
                <Carets w={7} rows={[1, 1, 0]} />
                <Rule $gap={6} />
                <Icons w={30} names={['sheetView', 'dwg', 'beamDoc']} />
                <Carets w={7} rows={[1, 1, 1]} />
            </GroupBody>
            <GroupTitle>Документирование</GroupTitle>
        </Group>
        <Group $w={245}>
            <GroupBody>
                <Tool w={90} icon="spec" lines={['Спецификации']} />
                <Icons w={28} names={['beamPage', 'nodePage']} />
                <Rule $gap={5} />
                <Tool w={50} icon="cadlib" lines={['Панель', 'CADlib']} />
                <Column $w={24}>
                    {['IFC', 'PDF', 'SCAD'].map(t => <Cell key={t}><Tiny>{t}</Tiny><Small name="share" size={14} /></Cell>)}
                </Column>
                <Carets w={10} rows={[1, 1, 1]} />
                <Column $w={32}>
                    <Cell aria-label="пусто" />
                    <Cell><Tiny>NW</Tiny><Small name="share" size={14} /></Cell>
                </Column>
            </GroupBody>
            <GroupTitle>Отчеты и публикация</GroupTitle>
        </Group>
        <Group $w={78}>
            <GroupBody><Tool w={76} icon="settings" lines={['Настройки...']} /></GroupBody>
            <GroupTitle>Сервис</GroupTitle>
        </Group>
    </Ribbon>
)

/* ---------- left panel ---------- */

const Workspace = styled.div`
display:flex;
flex:1;
min-height:0;
background:#d8d8d8;
`;
const LeftDock = styled.aside`
display:flex;
flex-direction:column;
flex:none;
width:410px;
margin-right:4px;
`;
const DockTitle = styled.div`
display:flex;
align-items:center;
gap:4px;
height:21px;
flex:none;
padding:0 2px 0 ${({ $pad }) => $pad || 4}px;
white-space:nowrap;
background:#e4e4e4;
color:#222;
`;
const Grow = styled.span`
flex:1;
`;
const DockBody = styled.div`
flex:1;
min-height:0;
padding:3px 12px 0;
background:#e8e8e8;
border:1px solid #777;
border-bottom:0;
`;
const PropTools = styled.div`
display:flex;
align-items:center;
height:23px;
`;
const PropTool = styled.button`
display:flex;
align-items:center;
justify-content:center;
width:22px;
height:22px;
background:${({ $on }) => $on ? '#cfcfcf' : 'transparent'};
outline:${({ $on }) => $on ? '1px solid #999' : 'none'};
outline-offset:-1px;
`;
const ToolRule = styled.span`
width:1px;
height:14px;
margin:0 ${({ $gap }) => $gap}px;
background:#999;
`;
const PropTable = styled.table`
width:100%;
table-layout:fixed;
`;
const Indent = styled.col`
width:17px;
`;
const NameCol = styled.col`
width:151px;
`;
const PropHead = styled.th`
height:20px;
padding:0 10px 0 6px;
text-align:left;
background:#d8d8d8;
`;
const HeadRow = styled.span`
display:flex;
align-items:center;
justify-content:space-between;
`;
const Minus = styled.span`
width:8px;
height:2px;
background:#000;
`;
const PropCell = styled.td`
height:22px;
padding:1px 0 0 ${({ $value }) => $value ? 3 : 5}px;
white-space:nowrap;
font-family:Roboto, sans-serif;
border:1px solid #d8d8d8;
color:${({ $dim }) => $dim ? '#8c8c8c' : '#000'};
`;
const DockTabs = styled.div`
display:flex;
height:24px;
flex:none;
padding-left:2px;
border-top:1px solid #bbb;
`;
const DockTab = styled.button`
height:21px;
padding:0 8px;
background:${({ $on }) => $on ? '#e8e8e8' : '#d0d0d0'};
`;

const sections = [
    ['Общие', ['Слой', 'Цвет', 'Тип линий', 'Масштаб типа линий', 'Стиль печати', 'Вес линий', 'Гиперссылка', 'Прозрачность']],
    ['3D-визуализация', ['Материал']],
    ['Разное', ['Наименование объекта', 'Длина', 'Вес']],
    ['Параметры', ['Параметры', 'Родительская сборка']],
    ['Строительная арматура', [['Класс арматуры', 'А400'], ['Диаметр арматуры', '10'], ['Минимальный угол загиба', '90', 1], ['Минимальный диаметр гиба', '60', 1], ['Погонный вес', '0.617', 1], ['Площадь сечения', '78.5', 1]]],
];

const Properties = () => (
    <LeftDock>
        <DockTitle>Свойства<Grow /><Small name="pin" size={12} /><QuickButton $wide={16} aria-label="Закрыть"><Small name="cross" size={12} /></QuickButton></DockTitle>
        <DockBody>
            <PropTools>
                <PropTool $on aria-label="Добавить"><Small name="cursorPlus" /></PropTool>
                <PropTool aria-label="Выбор"><Small name="cursor" size={14} /></PropTool>
                <ToolRule $gap={4} />
                <PropTool aria-label="Рамка"><Small name="selBox" /></PropTool>
                <PropTool aria-label="Все"><Small name="selAll" /></PropTool>
                <PropTool aria-label="Секущая"><Small name="selTri" /></PropTool>
                <PropTool aria-label="Фильтр"><Small name="filter" /></PropTool>
                <ToolRule $gap={2} />
                <PropTool aria-label="Рамка"><Small name="selBox" /></PropTool>
            </PropTools>
            <PropTable>
                <colgroup><Indent /><NameCol /><col /></colgroup>
                <tbody>
                    <tr><PropCell colSpan="3">Объекты</PropCell></tr>
                    {sections.map(([title, rows]) => (
                        <React.Fragment key={title}>
                            <tr><PropHead colSpan="3"><HeadRow>{title}<Minus /></HeadRow></PropHead></tr>
                            {rows.map(r => {
                                const [name, value, dim] = Array.isArray(r) ? r : [r, ''];
                                return (
                                    <tr key={name}>
                                        <td />
                                        <PropCell>{name}</PropCell>
                                        <PropCell $value $dim={dim}>{value}</PropCell>
                                    </tr>
                                )
                            })}
                        </React.Fragment>
                    ))}
                </tbody>
            </PropTable>
        </DockBody>
        <DockTabs>
            <DockTab $on>Свойства</DockTab>
            <DockTab>IFC</DockTab>
        </DockTabs>
    </LeftDock>
)

/* ---------- drawing area ---------- */

const Main = styled.div`
display:flex;
flex-direction:column;
flex:1;
min-width:0;
`;
const Upper = styled.div`
display:flex;
flex:1;
gap:4px;
min-height:0;
`;
const Document = styled.section`
display:flex;
flex-direction:column;
flex:1;
min-width:0;
border:1px solid #777;
`;
const DocTabs = styled.div`
display:flex;
align-items:center;
height:20px;
flex:none;
padding-right:5px;
border-bottom:1px solid #777;
`;
const DocTab = styled.div`
display:flex;
align-items:center;
gap:10px;
height:19px;
padding:2px 2px 0 19px;
background:#e4e4e4;
`;
const Canvas = styled.div`
flex:1;
min-height:0;
overflow:hidden;
background:#fff;
`;
const SheetTabs = styled.div`
display:flex;
align-items:flex-start;
height:22px;
flex:none;
padding-left:4px;
`;
const SheetTab = styled.button`
height:18px;
padding:0 8px;
background:${({ $on }) => $on ? '#efefef' : '#cdcdcd'};
`;
const SheetIcon = styled.span`
width:34px;
padding-top:2px;
`;

const stirrups = [586, 629, 672, 716, 759, 802, 845];

const Model = () => (
    <Svg width="1200" height="752" viewBox="415 166 1200 752" aria-label="Модель">
        {/* slab */}
        <path d="M902 170 1100 170 1403 268 1403 312 1282 441 1150 590 1000 590 1000 200z" fill="#c9c9c9" />
        <path d="M1403 268v44L1282 441v-43z" fill="#b5b5b5" />
        <path d="M1282 280 1370 302 1282 398z" fill="#dedede" />
        <path d="M902 168h170" stroke="#999" />
        <path d="M914 168h30M990 168h6" stroke="#c79a2b" />
        <g fill="none" stroke="#444">
            <path d="M1200 208 1403 268v44L1240 484M1403 268 1240 443M1370 302l33 10" />
        </g>
        <g stroke="#c2952a" strokeWidth="2">
            <path d="M1270 267l24-26M1270 286l25-15M1270 345l82-86M1270 375l82-86" />
            <path d="M1270 271l101 31M1270 302l101 30M1270 315l71 20M1270 344l71 22M1270 356l40 12M1270 386l40 12" />
        </g>
        <circle cx="1398" cy="282" r="5" fill="#b98a70" stroke="#9a7a6a" />
        <g fill="none" stroke="#8a8a8a">
            <circle cx="1387" cy="261" r="77" />
            <circle cx="1387" cy="261" r="39" />
            <path d="M1387 184v155M1310 261h155" />
        </g>
        {/* beam */}
        <path d="M593 627 620 600 745 600 651 699 593 682z" fill="#bdbdbd" />
        <path d="M651 644 692 600 745 600 651 699z" fill="#a9a9a9" />
        <g fill="none" stroke="#c2952a" strokeWidth="2">
            <path d="M604 642 646 600M639 653 692 600M639 686 722 600" />
        </g>
        <path d="M640 604v32M640 637l38 10v-36l-38-10M672 604l37 9v-12" fill="none" stroke="#2a8f62" strokeWidth="1.600" />
        <path d="M604 674 672 600" stroke="#2f7fd0" strokeWidth="4" />
        <path d="M593 627l58 17v55l-58-17zM593 627l27-27M651 644l41-44M651 699l94-99" fill="none" stroke="#333" />
        <path d="M600 669h10v10h-10zM595 672l8 0" fill="#0f6fe0" stroke="#0f6fe0" />
        {/* column */}
        <ellipse cx="798" cy="903" rx="92" ry="52" fill="#f0f0f0" stroke="#777" />
        <path d="M826 868l45 50" stroke="#777" />
        <path d="M765 600h66v260q-33 30-66 0z" fill="#bdbdbd" />
        <path d="M765 600h8v262l-8-4zM826 600h5v260l-5 4z" fill="#9c9c9c" />
        <path d="M828 600v260" stroke="#444" />
        <g fill="none" stroke="#2a8f62" strokeWidth="1.600">
            {stirrups.map(y => <path key={y} d={`M774 ${y + 18}l16-18 33 11-17 17zM774 ${y + 16}l7 1`} />)}
        </g>
        <g fill="none" stroke="#c2952a" strokeWidth="2.500">
            <path d="M775.500 600v296q-1 6-5 5-4-2-4-11M791.500 600v280q-2 4-5 3-3-1-3-6M805.500 600v306q1 6 5 5 4-2 4-9M821 600v287q1 8 5 7 4-2 4-9" />
        </g>
        <ellipse cx="798" cy="859" rx="33" ry="19" fill="none" stroke="#111" strokeWidth="1.400" />
        <path d="M728.500 794.500v17l4-4 3 7 3-1-3-7h6z" fill="#fff" stroke="#111" />
    </Svg>
)

const RightDock = styled.aside`
display:flex;
flex-direction:column;
flex:none;
width:128px;
overflow:hidden;
border-left:1px solid #777;
background:#e8e8e8;
`;
const RightTools = styled.div`
display:flex;
align-items:center;
gap:10px;
height:24px;
flex:none;
padding-left:11px;
border-bottom:1px solid #333;
`;
const RightBody = styled.div`
display:flex;
flex-direction:column;
flex:1;
min-height:0;
padding:12px 0 0 11px;
`;
const Combo = styled.select`
appearance:none;
width:100%;
height:21px;
padding:0 2px;
border:1px solid #bbb;
border-right:0;
border-radius:0;
background:#e0e0e0;
font-family:Roboto, sans-serif;
`;
const Search = styled.input`
width:100%;
height:20px;
margin:9px 0 14px;
padding:0 4px;
border:1px solid #777;
border-right:0;
background:#f6f6f6;
`;
const Gallery = styled.div`
flex:1;
min-height:0;
overflow:hidden;
border:1px solid #777;
border-right:0;
background:#fff;
`;
const BlockItem = styled.figure`
margin:0;
height:171px;
`;
const BlockName = styled.figcaption`
width:144px;
margin-top:9px;
text-align:center;
line-height:13px;
white-space:pre;
`;

const Block = () => (
    <Svg width="115" height="90" viewBox="1501 268 115 90" aria-hidden="true">
        <path d="M1535 300 1591 268 1640 268 1555 311z" fill="#828282" />
        <path d="M1555 311 1616 277v34l-61 33z" fill="#4b4b60" />
        <path d="M1535 300l20 11v33l-20-11z" fill="#858585" />
        <path d="M1535 333v-33l56-32M1555 344v-33M1535 333l20 11" fill="none" stroke="#000" />
        <path d="M1535 300l20 11 61-34M1555 344l61-33" fill="none" stroke="#000" strokeDasharray="2 1" />
    </Svg>
)

/* ---------- command line ---------- */

const Command = styled.section`
display:flex;
flex:none;
height:70px;
margin-top:4px;
`;
const Gutter = styled.div`
display:flex;
flex-direction:column;
align-items:center;
gap:6px;
width:18px;
padding-top:5px;
background:#d8d8d8;
`;
const Sideways = styled.span`
writing-mode:vertical-rl;
transform:rotate(180deg);
color:#444;
`;
const CommandMain = styled.div`
display:flex;
flex-direction:column;
flex:1;
min-width:0;
background:#ebebeb;
font-family:"DejaVu Sans Mono", monospace;
font-size:12px;
`;
const History = styled.div`
display:flex;
flex-direction:column;
justify-content:flex-end;
flex:1;
min-height:0;
overflow:hidden;
margin-top:2px;
padding:0 1px 2px;
white-space:pre;
`;
const Prompt = styled.label`
display:flex;
height:16px;
flex:none;
padding-left:1px;
border:1px solid #555;
border-width:1px 0 0 1px;
`;
const PromptInput = styled.input`
flex:1;
padding:0;
border:none;
background:transparent;
`;

/* ---------- status bar ---------- */

const Status = styled.footer`
display:flex;
align-items:center;
height:24px;
flex:none;
padding:0 0 0 3px;
background:#d8d8d8;
`;
const Coords = styled.span`
width:156px;
`;
const Toggle = styled.button`
height:20px;
padding:0 3px 0 4px;
white-space:nowrap;
border:1px solid ${({ $on }) => $on ? '#e4e4e4' : '#9a9a9a'};
background:${({ $on }) => $on ? '#e4e4e4' : '#cdcdcd'};
margin-left:${({ $gap }) => $gap || 0}px;
`;
const StatusRight = styled.div`
display:flex;
align-items:center;
gap:4px;
margin-left:auto;
`;
const ScaleText = styled.span`
width:88px;
text-align:center;
`;
const Space = styled.span`
width:76px;
`;
const ViewTools = styled.div`
display:flex;
gap:7px;
`;

const toggles = [['ШАГ', 1], ['СЕТКА', 1], ['оПРИВЯЗКА'], ['ОТС-ОБЪЕКТ'], ['ОТС-ПОЛЯР'], ['ОРТО', 1], ['ДИН-ВВОД'], ['ВЕС', 1, 4], ['ШТРИХОВКА']];

const StatusBar = () => (
    <Status>
        <Coords>54.0459,-2799.7840,0.0000</Coords>
        {toggles.map(([t, on, gap]) => <Toggle key={t} $on={on} $gap={gap}>{t}</Toggle>)}
        <StatusRight>
            <span>МОДЕЛЬ</span>
            <Small name="locks" />
            <Small name="tray" size={14} />
            <Space />
            <Caret $size={4} />
            <Small name="selFilter" />
            <Small name="bulb" />
            <Small name="noTrack" size={18} />
            <ScaleText>*m1:100</ScaleText>
            <ViewTools>
                <Small name="pan" />
                <Small name="zoom" />
                <Small name="selFilter" size={8} />
            </ViewTools>
        </StatusRight>
    </Status>
)

/* ---------- dialog ---------- */

const Dialog = styled.section`
position:absolute;
left:884px;
right:0;
top:498px;
bottom:63px;
display:flex;
flex-direction:column;
background:#f0f0f0;
border:1px solid #666;
border-width:0 0 1px 1px;
box-shadow:0 0 12px rgba(0,0,0,.4);
font-family:"Liberation Sans", sans-serif;
`;
const DialogTitle = styled.div`
display:flex;
align-items:center;
justify-content:flex-end;
height:31px;
flex:none;
padding-right:3px;
background:#747474;
`;
const DialogBody = styled.div`
display:flex;
height:406px;
flex:none;
padding:11px 8px 0 11px;
`;
const ListBox = styled.div`
width:204px;
flex:none;
background:#fff;
border:1px solid #777;
`;
const Splitter = styled.div`
width:32px;
flex:none;
padding:62px 0 0 10px;
`;
const GridBox = styled.div`
flex:1;
min-width:0;
background:linear-gradient(to right, #f0f0f0 16px, #fbfbfb 16px);
`;
const Grid = styled.table`
width:100%;
table-layout:fixed;
`;
const FoldCol = styled.col`
width:16px;
`;
const KeyCol = styled.col`
width:156px;
`;
const Fold = styled.button`
display:block;
width:9px;
height:9px;
margin-left:2px;
border:1px solid #000;
background:linear-gradient(#000, #000) center / 5px 1px no-repeat;
`;
const FoldCell = styled.td`
padding:0;
`;
const GridHead = styled.th`
height:19px;
padding:0 2px;
text-align:left;
font-size:12px;
background:#e8e8e8;
`;
const GridCell = styled.td`
height:19px;
padding:2px 0 0 2px;
overflow:hidden;
white-space:nowrap;
border:1px solid #aaa;
border-right:0;
border-top-color:${({ $mark }) => $mark ? '#0078d7' : '#aaa'};
border-top-width:${({ $mark }) => $mark ? 2 : 1}px;
background:${({ $picked }) => $picked ? '#0078d7' : 'transparent'};
color:${({ $picked }) => $picked ? '#fff' : '#000'};
`;
const Edit = styled.input`
display:block;
width:26px;
height:14px;
padding:0;
margin-left:-1px;
border:none;
background:#0078d7;
color:#fff;
`;
const Scroll = styled.div`
display:flex;
flex-direction:column;
align-items:center;
width:16px;
flex:none;
padding:6px 0;
`;
const Thumb = styled.div`
width:15px;
height:17px;
margin-bottom:6px;
background:#d0d0d0;
`;
const SideTools = styled.div`
display:flex;
flex-direction:column;
width:23px;
flex:none;
margin-left:5px;
`;
const SideTool = styled.button`
display:flex;
align-items:center;
justify-content:center;
height:22px;
background:${({ $on }) => $on ? '#a9cdea' : 'transparent'};
outline:${({ $on }) => $on ? '1px solid #7fb4e0' : 'none'};
outline-offset:-1px;
`;
const SideRule = styled.span`
height:1px;
margin:3px 1px 4px;
background:#999;
`;
const DialogFoot = styled.div`
display:flex;
justify-content:flex-end;
gap:8px;
padding:9px 6px 0;
font-family:"Open Sans", sans-serif;
`;
const DialogButton = styled.button`
width:73px;
height:21px;
background:#e1e1e1;
border:${({ $main }) => $main ? '2px solid #0078d7' : '1px solid #aaa'};
`;

const gridRows = [
    ['Диаметр арматуры', '10'],
    ['Минимальный угол загиба', '90'],
    ['Минимальный диаметр гиба', '60'],
    ['Погонный вес', '0.617'],
    ['Площадь сечения', '78.5'],
    ['Учет перепуска', 'Выкл'],
    ['Длина перепуска', '0'],
    ['Базовая длина расчета пер...', '11700'],
    ['Размеры'],
    ['Длина', '2850', 'edit'],
    ['Строительная сборка'],
    ['Подгруппа сборки', ''],
    ['Идентификатор родительск...', 'Д6'],
    ['Общие'],
    ['REBAR_SPCKEY', '11D-0-0-0'],
    ['Крюк в конце', '0'],
    ['Угол загиба крюка в конце', '180'],
    ['Крюк в начале', '0'],
    ['Угол загиба крюка в начале', '180'],
    ['SYS_DB_UID', '{1AF7E392-C1D4-4BA6-9850-1CF6B73C...'],
];

const sideTools = [
    ['tree', 'az', 'plusMinus', 'editProps'],
    ['addTree', 'pencil', 'removeRow'],
    ['hand', 'sparkRow', 'sparkGrid'],
    ['erase', 'eraseRed'],
];

const PropertyDialog = () => (
    <Dialog>
        <DialogTitle><QuickButton $wide={16} aria-label="Закрыть"><Small name="crossLight" /></QuickButton></DialogTitle>
        <DialogBody>
            <ListBox />
            <Splitter><Svg width="10" height="8" viewBox="0 0 10 8"><path d="M1 6l4-4 4 4" fill="none" stroke="#666" strokeWidth="1.500" /></Svg></Splitter>
            <GridBox>
                <Grid>
                    <colgroup><FoldCol /><KeyCol /><col /></colgroup>
                    <tbody>
                        {gridRows.map(([name, value, edit]) => value === undefined ? (
                            <tr key={name}>
                                <FoldCell><Fold aria-label="Свернуть" /></FoldCell>
                                <GridHead colSpan="2">{name}</GridHead>
                            </tr>
                        ) : (
                            <tr key={name}>
                                <td />
                                <GridCell $picked={!!edit} $mark={!!edit}>{name}</GridCell>
                                <GridCell $mark={!!edit}>{edit ? <Edit aria-label={name} defaultValue={value} /> : value}</GridCell>
                            </tr>
                        ))}
                    </tbody>
                </Grid>
            </GridBox>
            <Scroll>
                <Svg width="8" height="6" viewBox="0 0 8 6"><path d="M1 5l3-3 3 3" fill="none" stroke="#333" strokeWidth="1.600" /></Svg>
                <Grow />
                <Thumb />
                <Svg width="8" height="6" viewBox="0 0 8 6"><path d="M1 1l3 3 3-3" fill="none" stroke="#333" strokeWidth="1.600" /></Svg>
            </Scroll>
            <SideTools>
                {sideTools.map((set, i) => (
                    <React.Fragment key={i}>
                        {i > 0 && <SideRule />}
                        {set.map(n => <SideTool key={n} aria-label={n} $on={n === 'tree' || n === 'editProps'}><Small name={n} /></SideTool>)}
                    </React.Fragment>
                ))}
            </SideTools>
        </DialogBody>
        <DialogFoot>
            <DialogButton $main>ОК</DialogButton>
            <DialogButton>Отмена</DialogButton>
        </DialogFoot>
    </Dialog>
)

/* ---------- enlarged group ---------- */

const Scrim = styled.div`
position:absolute;
inset:0;
background:rgba(0,0,0,.56);
pointer-events:none;
`;
const Lens = styled.section`
position:absolute;
left:170px;
top:169px;
width:1112px;
border:4px solid #8b8b8b;
background:#e8e8e8;
box-shadow:inset 0 0 4px 2px #fff;
font-size:51px;
line-height:60px;
-webkit-text-stroke:1px #000;
`;
const LensBody = styled.div`
display:flex;
height:356px;
`;
const LensTool = styled.button`
display:flex;
flex-direction:column;
align-items:center;
gap:16px;
flex:none;
width:${({ $w }) => $w}px;
padding-top:39px;
`;
const LensColumn = styled.div`
display:flex;
flex-direction:column;
align-items:center;
gap:38px;
flex:none;
width:${({ $w }) => $w}px;
padding-top:14px;
`;
const LensCell = styled.button`
display:flex;
align-items:center;
justify-content:center;
height:73px;
`;
const LensRule = styled.div`
flex:none;
width:6px;
height:298px;
margin:28px 0 0 29px;
border-radius:2px;
background:#0a0a0a;
`;
const LensTitle = styled.div`
height:69px;
margin:0 2px 2px;
padding:3px 8px 0 0;
text-align:center;
background:#dcdcdc;
`;

const Magnified = () => (
    <Lens>
        <LensBody>
            <LensTool $w={260}><Big name="column" size={146} />Колонна</LensTool>
            <LensTool $w={212}><Big name="beam" size={146} />Балка</LensTool>
            <LensTool $w={282}><Big name="rod" size={146} />Стержень</LensTool>
            <LensColumn $w={124}>
                <LensCell aria-label="Крюк"><Small name="hook" size={73} /></LensCell>
                <LensCell aria-label="Хомут"><Small name="clamp" size={73} /></LensCell>
                <LensCell aria-label="Приямок"><Small name="pit" size={73} /></LensCell>
            </LensColumn>
            <LensColumn $w={38}>
                <LensCell aria-label="Ещё"><Caret $size={12} /></LensCell>
                <LensCell aria-label="Ещё"><Caret $size={12} /></LensCell>
            </LensColumn>
            <LensRule />
            <LensColumn $w={138}>
                <LensCell aria-label="Куб"><Small name="cube" size={73} /></LensCell>
                <LensCell aria-label="Сдвиг"><Small name="rodMove" size={73} /></LensCell>
            </LensColumn>
        </LensBody>
        <LensTitle>Бетонные конструкции</LensTitle>
    </Lens>
)

const App = () => {
    return (
        <>
            <GlobalStyle />
            <Page>
                <TopBar />
                <RibbonBar />
                <Workspace>
                    <Properties />
                    <Main>
                        <Upper>
                            <Document>
                                <DocTabs>
                                    <DocTab>Проект.dwg*<QuickButton $wide={16} aria-label="Закрыть"><Small name="cross" size={12} /></QuickButton></DocTab>
                                    <Grow />
                                    <Caret $size={5} />
                                </DocTabs>
                                <Canvas><Model /></Canvas>
                                <SheetTabs>
                                    <SheetIcon><Small name="layout" /></SheetIcon>
                                    <SheetTab $on>Модель</SheetTab>
                                    <SheetTab>A4</SheetTab>
                                </SheetTabs>
                            </Document>
                            <RightDock>
                                <DockTitle $pad={3}>Узлы и готовые решения</DockTitle>
                                <RightTools><Small name="square" /><Small name="sortAz" /><Small name="turn" /></RightTools>
                                <RightBody>
                                    <Combo aria-label="Категория" defaultValue="Все элементы"><option>Все элементы</option></Combo>
                                    <Search aria-label="Поиск" defaultValue="Бетон" />
                                    <Gallery>
                                        <BlockItem><Block /><BlockName>{'Блок бетонный для\nподвалов ФБС 9.3.6'}</BlockName></BlockItem>
                                        <BlockItem><Block /></BlockItem>
                                    </Gallery>
                                </RightBody>
                            </RightDock>
                        </Upper>
                        <Command>
                            <Gutter><Small name="cross" size={12} /><Small name="pin" size={12} /><Sideways>Коман</Sideways></Gutter>
                            <CommandMain>
                                <History>{'Блок: "Модель" (1/2). Преобразование параметрических 3D-тел [ ACIS ]\n\nКонвертация прошла успешно\nCLOSE,ЗАКРЫТЬ,ПОКИНУТЬ - Закрыть'}</History>
                                <Prompt>Команда:<PromptInput /></Prompt>
                            </CommandMain>
                        </Command>
                    </Main>
                </Workspace>
                <StatusBar />
            </Page>
            <PropertyDialog />
            <Scrim />
            <Magnified />
        </>
    )
}

export default App
